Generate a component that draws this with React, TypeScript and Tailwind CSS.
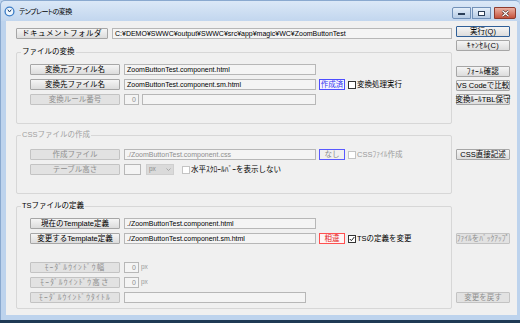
import React from "react";

type BtnProps = { children: React.ReactNode; className?: string; disabled?: boolean; primary?: boolean };

function Btn({ children, className = "", disabled = false, primary = false }: BtnProps) {
  const tone = disabled
    ? "border-[#c3c3c3] bg-[#e2e2e2] text-[#8e8e8e]"
    : primary
    ? "border-[#2f5f98] bg-gradient-to-b from-[#f5f5f5] to-[#dcdcdc] text-black"
    : "border-[#a6a6a6] bg-gradient-to-b from-[#f5f5f5] to-[#dcdcdc] text-black";
  return (
    <div
      className={`flex h-[11px] shrink-0 items-center justify-center whitespace-nowrap rounded-[1px] border text-[7.5px] leading-none ${tone} ${className}`}
    >
      {children}
    </div>
  );
}

function Field({ children, className = "", disabled = false, right = false }: { children?: React.ReactNode; className?: string; disabled?: boolean; right?: boolean }) {
  return (
    <div
      className={`flex h-[11px] shrink-0 items-center overflow-hidden whitespace-nowrap border border-[#b7b7b7] bg-[#f4f4f4] px-[2px] text-[7px] leading-none ${
        right ? "justify-end" : ""
      } ${disabled ? "text-[#8e8e8e]" : "text-black"} ${className}`}
    >
      {children}
    </div>
  );
}

function Check({ checked = false, disabled = false }: { checked?: boolean; disabled?: boolean }) {
  return (
    <div
      className={`flex h-[8px] w-[8px] shrink-0 items-center justify-center border bg-white ${
        disabled ? "border-[#c4c4c4]" : "border-[#333333]"
      }`}
    >
      {checked && (
        <svg width="6" height="6" viewBox="0 0 6 6">
          <polyline points="0.8,3 2.4,4.7 5.3,1" fill="none" stroke="#222" strokeWidth="1" />
        </svg>
      )}
    </div>
  );
}

function Group({ label, disabled = false, children, className = "" }: { label: string; disabled?: boolean; children: React.ReactNode; className?: string }) {
  return (
    <div className={`rounded-[2px] border border-[#d7d7d7] ${className}`}>
      <div
        className={`-mt-[6px] ml-[4px] w-fit bg-[#f0f0f0] px-[1px] text-[7.5px] leading-[10px] ${
          disabled ? "text-[#a0a0a0]" : "text-black"
        }`}
      >
        {label}
      </div>
      {children}
    </div>
  );
}

export default function App() {
  return (
    <div className="flex h-[323px] w-[520px] flex-col overflow-hidden bg-[#bdd3ed] font-['Liberation_Sans','Noto_Sans_CJK_JP',sans-serif]">
      {/* title bar */}
      <div className="flex h-[21px] shrink-0 items-start rounded-t-[5px] border-l border-t border-[#8aa9cf] bg-gradient-to-b from-[#dbe8f7] to-[#c2d6ee] pr-[4px]">
        <div className="ml-[3px] mt-[5px] flex items-center">
          <svg width="11" height="11" viewBox="0 0 11 11">
            <circle cx="5.5" cy="5.5" r="4.4" fill="#eef6fd" stroke="#3b7cc6" strokeWidth="1.3" />
            <path d="M3.8 3.6 L5.5 6 L7.3 3.6" fill="none" stroke="#1d3f6e" strokeWidth="1" />
          </svg>
          <span className="ml-[4px] text-[7px] leading-none tracking-[-0.6px] text-black [font-feature-settings:'palt']">テンプレートの変換</span>
        </div>
        <div className="flex-1" />
        <div className="mt-[6px] flex gap-[1px]">
          <div className="flex h-[12px] w-[19px] items-end justify-center rounded-l-[2px] border border-[#7291b8] bg-gradient-to-b from-[#e4eef9] to-[#b6cbe4] pb-[3px]">
            <div className="h-[2px] w-[7px] border border-[#2c3f58] bg-white" />
          </div>
          <div className="flex h-[12px] w-[19px] items-center justify-center border border-[#7291b8] bg-gradient-to-b from-[#e4eef9] to-[#b6cbe4]">
            <div className="h-[5px] w-[7px] border border-[#2c3f58] bg-white" />
          </div>
          <div className="ml-[2px] flex h-[12px] w-[22px] items-center justify-center rounded-r-[2px] border border-[#8e3b2d] bg-gradient-to-b from-[#eab0a2] to-[#c4513c]">
            <svg width="9" height="7" viewBox="0 0 9 7">
              <path d="M1.5 0.8 L7.5 6.2 M7.5 0.8 L1.5 6.2" stroke="#3a1610" strokeWidth="2.4" />
              <path d="M1.5 0.8 L7.5 6.2 M7.5 0.8 L1.5 6.2" stroke="#ffffff" strokeWidth="1.3" />
            </svg>
          </div>
        </div>
      </div>

      {/* body row */}
      <div className="flex h-[294px] shrink-0">
        <div className="w-[6px] shrink-0 border-l border-[#8aa9cf]" />
        <div className="flex w-[511px] shrink-0 bg-[#f0f0f0] pl-[10px]">
          {/* left column */}
          <div className="flex w-[436px] shrink-0 flex-col pt-[7px]">
            <div className="flex gap-[4px]">
              <Btn className="w-[92px] tracking-[0.5px]">ドキュメントフォルダ</Btn>
              <Field className="flex-1">C:¥DEMO¥SWWC¥output¥SWWC¥src¥app¥magic¥WC¥ZoomButtonTest</Field>
            </div>

            <Group label="ファイルの変換" className="mt-[13px]">
              <div className="flex flex-col gap-[4px] px-[13px] pb-[18px] pt-[7px]">
                <div className="flex items-center gap-[4px]">
                  <Btn className="w-[90px]">変換元ファイル名</Btn>
                  <Field className="w-[192px]">ZoomButtonTest.component.html</Field>
                </div>
                <div className="flex items-center gap-[4px]">
                  <Btn className="w-[90px]">変換先ファイル名</Btn>
                  <Field className="w-[192px]">ZoomButtonTest.component.sm.html</Field>
                  <div className="-ml-[1px] flex h-[11px] w-[26px] items-center justify-center border border-[#4d4dff] bg-[#f4f4ff] text-[7.5px] leading-none text-[#3434f0]">
                    作成済
                  </div>
                  <div className="-ml-[1px] flex items-center gap-[1px]">
                    <Check />
                    <span className="text-[7.5px] leading-none text-black">変換処理実行</span>
                  </div>
                </div>
                <div className="flex items-center gap-[4px]">
                  <Btn disabled className="w-[90px]">変換ルール番号</Btn>
                  <Field disabled right className="w-[15px]">0</Field>
                  <Field disabled className="-ml-[1px] w-[174px]" />
                </div>
              </div>
            </Group>

            <Group label="CSSファイルの作成" disabled className="mt-[11px]">
              <div className="flex flex-col gap-[4px] px-[13px] pb-[18px] pt-[9px]">
                <div className="flex items-center gap-[4px]">
                  <Btn disabled className="w-[90px]">作成ファイル</Btn>
                  <Field disabled className="w-[192px]">./ZoomButtonTest.component.css</Field>
                  <div className="-ml-[1px] flex h-[11px] w-[26px] items-center justify-center border border-[#5a5aff] bg-[#f0f0f0] text-[7.5px] leading-none text-[#8a8a8a]">
                    なし
                  </div>
                  <div className="-ml-[1px] flex items-center gap-[1px]">
                    <Check disabled />
                    <span className="text-[7.5px] leading-none text-[#9a9a9a]">CSSﾌｧｲﾙ作成</span>
                  </div>
                </div>
                <div className="flex items-center gap-[4px]">
                  <Btn disabled className="w-[90px]">テーブル高さ</Btn>
                  <Field disabled className="w-[17px]" />
                  <div className="ml-[1px] flex h-[11px] w-[28px] items-center justify-between border border-[#cfcfcf] bg-[#dadada] px-[2px] text-[6.5px] leading-none text-[#8a8a8a]">
                    <span>px</span>
                    <svg width="5" height="3" viewBox="0 0 5 3">
                      <polyline points="0.5,0.5 2.5,2.5 4.5,0.5" fill="none" stroke="#9a9a9a" strokeWidth="0.8" />
                    </svg>
                  </div>
                  <div className="ml-[4px] flex items-center gap-[1px]">
                    <Check disabled />
                    <span className="text-[7.5px] leading-none text-black">水平ｽｸﾛｰﾙﾊﾞｰを表示しない</span>
                  </div>
                </div>
              </div>
            </Group>

            <Group label="TSファイルの定義" className="mt-[12px]">
              <div className="flex flex-col px-[13px] pb-[5px] pt-[7px]">
                <div className="flex flex-col gap-[4px]">
                  <div className="flex items-center gap-[4px]">
                    <Btn className="w-[90px]">現在のTemplate定義</Btn>
                    <Field className="w-[192px]">./ZoomButtonTest.component.html</Field>
                  </div>
                  <div className="flex items-center gap-[4px]">
                    <Btn className="w-[90px]">変更するTemplate定義</Btn>
                    <Field className="w-[192px]">./ZoomButtonTest.component.sm.html</Field>
                    <div className="-ml-[1px] flex h-[11px] w-[26px] items-center justify-center border border-[#ff5050] bg-[#fff4f4] text-[7.5px] leading-none text-[#e02020]">
                      相違
                    </div>
                    <div className="-ml-[1px] flex items-center gap-[1px]">
                      <Check checked />
                      <span className="text-[7.5px] leading-none text-black">TSの定義を変更</span>
                    </div>
                  </div>
                </div>
                <div className="mt-[18px] flex flex-col gap-[4px]">
                  <div className="flex items-center gap-[4px]">
                    <Btn disabled className="w-[90px] tracking-[1.2px]">ﾓｰﾀﾞﾙｳｲﾝﾄﾞｳ幅</Btn>
                    <Field disabled right className="w-[15px]">0</Field>
                    <span className="-ml-[2px] text-[6.5px] leading-none text-[#9a9a9a]">px</span>
                  </div>
                  <div className="flex items-center gap-[4px]">
                    <Btn disabled className="w-[90px] tracking-[1.2px]">ﾓｰﾀﾞﾙｳｲﾝﾄﾞｳ高さ</Btn>
                    <Field disabled right className="w-[15px]">0</Field>
                    <span className="-ml-[2px] text-[6.5px] leading-none text-[#9a9a9a]">px</span>
                  </div>
                  <div className="flex items-center gap-[4px]">
                    <Btn disabled className="w-[90px] tracking-[1.2px]">ﾓｰﾀﾞﾙｳｲﾝﾄﾞｳﾀｲﾄﾙ</Btn>
                    <Field disabled className="w-[182px]" />
                  </div>
                </div>
              </div>
            </Group>
          </div>

          {/* right column */}
          <div className="ml-[4px] flex w-[54px] shrink-0 flex-col pt-[5px]">
            <Btn primary className="w-[54px]">実行(Q)</Btn>
            <Btn className="mt-[3px] w-[54px] tracking-[0.4px]">ｷｬﾝｾﾙ(C)</Btn>
            <Btn className="mt-[15px] w-[54px] tracking-[0.4px]">ﾌｫｰﾑ確認</Btn>
            <Btn className="mt-[3px] w-[54px]">VS Codeで比較</Btn>
            <Btn className="mt-[3px] w-[54px]">変換ﾙｰﾙTBL保守</Btn>
            <Btn className="mt-[44px] w-[54px]">CSS直接記述</Btn>
            <Btn disabled className="mt-[73px] w-[54px]">ﾌｧｲﾙをﾊﾞｯｸｱｯﾌﾟ</Btn>
            <Btn disabled className="mt-[48px] w-[54px]">変更を戻す</Btn>
          </div>
        </div>
        <div className="flex-1" />
      </div>
      <div className="h-[5px] shrink-0 border-l border-[#8aa9cf]" />
      <div className="h-[3px] shrink-0 bg-[#1f3a55]" />
    </div>
  );
}
